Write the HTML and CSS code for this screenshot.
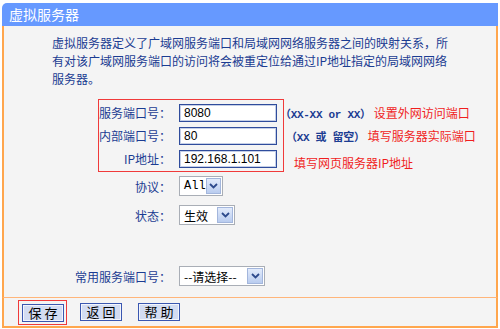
FILE: index.html
```html
<!DOCTYPE html>
<html lang="zh-CN">
<head>
    <meta charset="UTF-8">
    <title>虚拟服务器</title>
    <link rel="stylesheet" href="styles.css">
</head>
<body>
    <div class="panel">
        <div class="title">虚拟服务器</div>

        <div class="content">
            <p class="desc">虚拟服务器定义了广域网服务端口和局域网网络服务器之间的映射关系，所<br>有对该广域网服务端口的访问将会被重定位给通过IP地址指定的局域网网络<br>服务器。</p>

            <!-- 需要填写的三项 -->
            <div class="mark">
                <div class="row">
                    <span class="lbl">服务端口号：</span>
                    <input class="field" type="text" value="8080">
                    <span class="hint">（XX-XX or XX）</span>
                    <span class="note">设置外网访问端口</span>
                </div>
                <div class="row">
                    <span class="lbl">内部端口号：</span>
                    <input class="field" type="text" value="80">
                    <span class="hint wide">（XX 或 留空）</span>
                    <span class="note">填写服务器实际端口</span>
                </div>
                <div class="row">
                    <span class="lbl">IP地址：</span>
                    <input class="field" type="text" value="192.168.1.101">
                    <span class="note low">填写网页服务器IP地址</span>
                </div>
            </div>

            <div class="opts">
                <div class="row">
                    <span class="lbl">协议：</span>
                    <div class="select proto">
                        <span class="val mono">All</span>
                        <span class="arrow"><svg width="9" height="6" viewBox="0 0 9 6"><path d="M1 1l3.5 3.5L8 1" fill="none" stroke="#2d4a8c" stroke-width="1.8"/></svg></span>
                    </div>
                </div>
                <div class="row">
                    <span class="lbl">状态：</span>
                    <div class="select state">
                        <span class="val">生效</span>
                        <span class="arrow"><svg width="9" height="6" viewBox="0 0 9 6"><path d="M1 1l3.5 3.5L8 1" fill="none" stroke="#2d4a8c" stroke-width="1.8"/></svg></span>
                    </div>
                </div>
            </div>

            <div class="row common">
                <span class="lbl">常用服务端口号：</span>
                <div class="select pick">
                    <span class="val">--请选择--</span>
                    <span class="arrow"><svg width="9" height="6" viewBox="0 0 9 6"><path d="M1 1l3.5 3.5L8 1" fill="none" stroke="#2d4a8c" stroke-width="1.8"/></svg></span>
                </div>
            </div>
        </div>

        <div class="foot">
            <span class="mark-btn"><button class="btn">保 存</button></span>
            <button class="btn">返 回</button>
            <button class="btn">帮 助</button>
        </div>
    </div>
</body>
</html>
```

FILE: styles.css
```css
body {
    margin: 0;
    background: #fff;
    font-family: "Noto Sans CJK SC", "Liberation Sans", sans-serif;
    font-size: 12px;
}

.panel {
    margin: 3px 0 0 2px;
    width: 496px;
}

.title {
    height: 23px;
    line-height: 23px;
    background: #6699ff;
    color: #fff;
    font-size: 14px;
    padding-left: 7px;
    border-radius: 5px 0 0 0;
}

.content {
    background: #f4f4f4;
    border-left: 2px solid #ffa64d;
    border-right: 2px solid #ffa64d;
    padding: 8px 0 9px;
}

.desc {
    margin: 0 0 11px 48px;
    line-height: 18px;
    color: #1b3c92;
}

.mark {
    margin-left: 94px;
    width: 184px;
    border: 1px solid #f03a3a;
    padding: 1px 0;
}

.row {
    display: flex;
    align-items: center;
    height: 23px;
    white-space: nowrap;
}

.row > * {
    flex-shrink: 0;
}

.lbl {
    width: 72px;
    text-align: right;
    color: #1b3c92;
    margin-right: 8px;
}

.field {
    width: 98px;
    height: 18px;
    box-sizing: border-box;
    border: 1px solid #2f4c9c;
    box-shadow: inset 0 0 0 1px #c5cfe6;
    background: #fff;
    padding: 0 4px;
    font-family: "Liberation Sans", sans-serif;
    font-size: 12px;
    color: #000;
}

.hint {
    margin-left: 3px;
    color: #1b3c92;
    font-weight: bold;
    font-family: "Liberation Mono", "Noto Sans CJK SC", monospace;
    font-size: 11px;
    letter-spacing: -0.3px;
}

.hint.wide {
    margin-left: 9px;
}

.note {
    margin-left: 3px;
    color: #f01e1e;
    font-size: 12px;
}

.note.low {
    margin-left: 17px;
    position: relative;
    top: 4px;
}

.opts {
    margin-top: 2px;
    display: flex;
    flex-direction: column;
    gap: 5px;
}

.opts .row {
    height: 24px;
    margin-left: 95px;
}

.common {
    margin-left: 71px;
    margin-top: 37px;
    height: 24px;
}

.common .lbl {
    width: 96px;
}

.select {
    display: flex;
    align-items: center;
    justify-content: space-between;
    height: 20px;
    box-sizing: border-box;
    border: 1px solid #a9aeb6;
    background: #fff;
    padding: 1px;
}

.select.proto { width: 44px; }
.select.state { width: 56px; }
.select.pick { width: 86px; }

.val {
    padding-left: 3px;
    color: #000;
}

.val.mono {
    font-family: "Liberation Mono", monospace;
    font-size: 12px;
}

.arrow {
    display: flex;
    align-items: center;
    justify-content: center;
    width: 16px;
    height: 16px;
    box-sizing: border-box;
    border: 1px solid #a3b6dc;
    background: linear-gradient(#e2ebfb, #b9ccef);
}

.foot {
    display: flex;
    align-items: center;
    height: 28px;
    background: #f4f4f4;
    border: 2px solid #ffa64d;
    border-top: 1px solid #ffb57a;
    padding-left: 14px;
}

.mark-btn {
    display: flex;
    border: 1px solid #f03a3a;
    padding: 3px 2px 2px 3px;
    margin-right: 13px;
}

.btn {
    width: 42px;
    height: 18px;
    box-sizing: border-box;
    border: 1px solid #3a57b0;
    box-shadow: inset 0 0 0 1px #f2f5fc;
    background: #d3dcf2;
    font-family: "Noto Sans CJK SC", sans-serif;
    font-size: 13px;
    line-height: 14px;
    padding: 0;
    margin-right: 16px;
    color: #000;
    cursor: pointer;
}

.mark-btn .btn {
    margin-right: 0;
}
```
